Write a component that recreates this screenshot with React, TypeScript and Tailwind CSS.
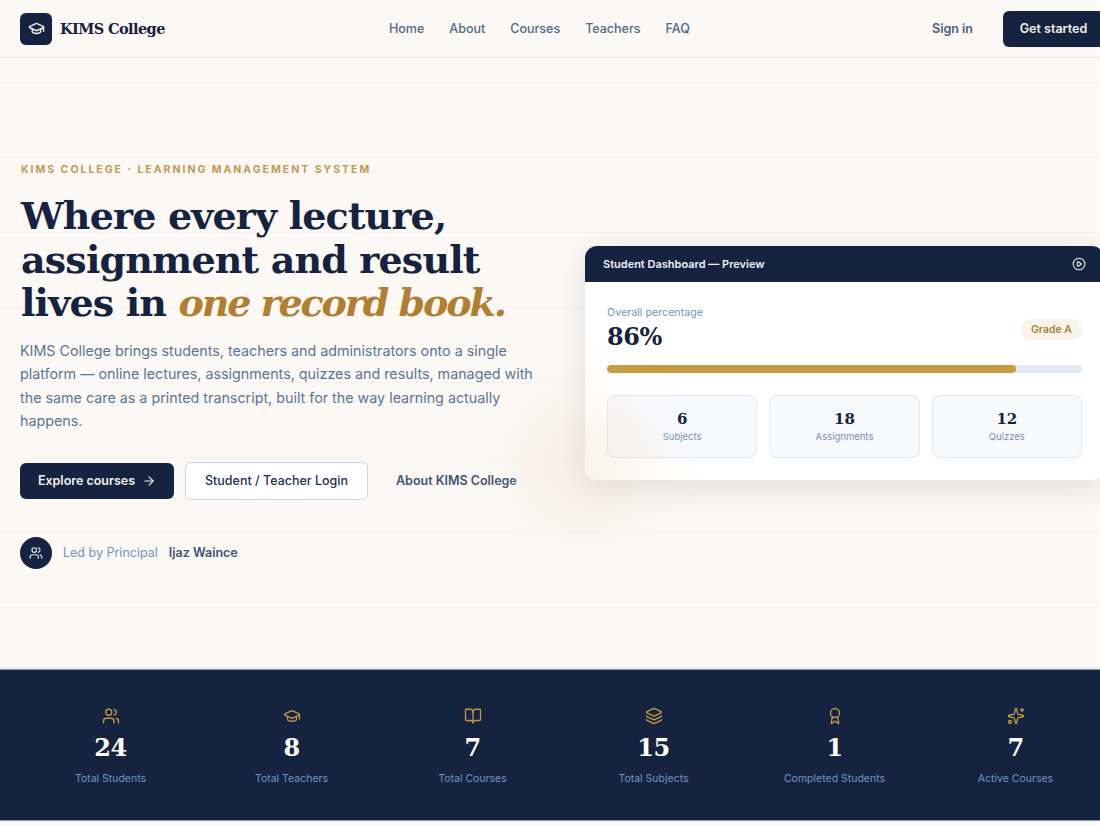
import React from 'react';
import { ArrowRight, Award, BookOpen, CirclePlay, GraduationCap, Layers, Sparkles, Users } from 'lucide-react';

const navLinks = ['Home', 'About', 'Courses', 'Teachers', 'FAQ'];

const previewStats = [
  { value: '6', label: 'Subjects' },
  { value: '18', label: 'Assignments' },
  { value: '12', label: 'Quizzes' },
];

const stats = [
  { icon: Users, value: '24', label: 'Total Students' },
  { icon: GraduationCap, value: '8', label: 'Total Teachers' },
  { icon: BookOpen, value: '7', label: 'Total Courses' },
  { icon: Layers, value: '15', label: 'Total Subjects' },
  { icon: Award, value: '1', label: 'Completed Students' },
  { icon: Sparkles, value: '7', label: 'Active Courses' },
];

function Nav() {
  return (
    <header className="flex h-[58px] items-center border-b border-[#e6ebf3] px-5">
      <div className="flex w-[369px] items-center gap-2">
        <span className="flex h-8 w-8 items-center justify-center rounded-md bg-[#152340] text-[#f6f1e8]">
          <GraduationCap size={17} strokeWidth={2} />
        </span>
        <span className="font-['DejaVu_Serif',serif] text-[14.5px] font-bold tracking-[-0.04em] text-[#152340]">KIMS College</span>
      </div>
      <nav className="flex items-center gap-[25px] pt-px text-[12.5px] font-medium text-[#4f6a8c]">
        {navLinks.map((link) => (
          <span key={link}>{link}</span>
        ))}
      </nav>
      <div className="ml-auto flex items-center gap-[30px]">
        <span className="pt-px text-[12.5px] font-semibold text-[#4a607f]">Sign in</span>
        <span className="flex h-9 w-[101px] items-center justify-center rounded-md bg-[#152340] pt-px text-[12.5px] font-semibold text-[#f4f1ea]">
          Get started
        </span>
      </div>
    </header>
  );
}

function Preview() {
  return (
    <div className="w-[519px] shrink-0 overflow-hidden rounded-xl bg-white shadow-[0_8px_30px_rgba(21,35,64,0.12)]">
      <div className="flex h-9 items-center justify-between bg-[#152340] px-[18px] pt-px text-[#eef1f5]">
        <span className="text-[11px] font-semibold">Student Dashboard — Preview</span>
        <CirclePlay size={14} strokeWidth={1.75} />
      </div>
      <div className="px-[22px] pb-[22px] pt-6">
        <div className="flex items-center justify-between">
          <div>
            <div className="text-[10.7px] leading-[14px] text-[#6f97c0]">Overall percentage</div>
            <div className="font-['DejaVu_Serif',serif] text-[24px] font-bold leading-[34px] tracking-[-0.02em] text-[#152340]">86%</div>
          </div>
          <span className="rounded-full bg-[#fbf4e8] px-[10px] py-[3px] text-[10.5px] font-semibold text-[#a97f3a]">Grade A</span>
        </div>
        <div className="mt-[11px] h-2 overflow-hidden rounded-full bg-[#e4eaf3]">
          <div className="h-full w-[86%] rounded-full bg-[#c89b3f]" />
        </div>
        <div className="mt-[22px] grid grid-cols-3 gap-3">
          {previewStats.map((s) => (
            <div key={s.label} className="flex h-[63px] flex-col items-center justify-center rounded-lg border border-[#dfe7f3] bg-[#f8f9fd]">
              <span className="font-['DejaVu_Serif',serif] text-[15px] font-bold leading-[22px] text-[#152340]">{s.value}</span>
              <span className="text-[9.5px] leading-[14px] text-[#7593b5]">{s.label}</span>
            </div>
          ))}
        </div>
      </div>
    </div>
  );
}

function Hero() {
  return (
    <section className="relative h-[611px] border-b-2 border-[#e9ebee] bg-[#fbf8f5]">
      {/* faint ruled-paper lines */}
      <div className="pointer-events-none absolute inset-0 bg-[repeating-linear-gradient(to_bottom,transparent_0px,transparent_24px,rgba(21,35,64,0.025)_24px,rgba(21,35,64,0.025)_25px,transparent_25px,transparent_75px)]" />
      <div className="relative flex h-full items-center justify-between px-5">
        <div className="w-[520px] shrink-0 pt-[7px]">
          <div className="pl-px text-[10.5px] font-bold leading-[14px] tracking-[0.19em] text-[#c19a50]">KIMS COLLEGE · LEARNING MANAGEMENT SYSTEM</div>
          <h1 className="mt-[17px] pl-px font-['DejaVu_Serif',serif] text-[38px] font-bold leading-[43.5px] tracking-[-0.022em] text-[#152340]">
            Where every lecture,
            <br />
            assignment and result
            <br />
            lives in <em className="tracking-[-0.055em] text-[#b07f30]">one record book.</em>
          </h1>
          <p className="mt-[14px] w-[520px] text-[14.3px] leading-[23.4px] text-[#5a7697]">
            KIMS College brings students, teachers and administrators onto a single platform — online lectures, assignments, quizzes and results, managed with the same care as a printed transcript, built for the way learning actually happens.
          </p>
          <div className="mt-[29px] flex items-center">
            <span className="flex h-9 w-[154px] items-center justify-center gap-[7px] rounded-md bg-[#152340] pt-px text-[12.5px] font-semibold text-[#f1f0ec]">
              Explore courses <ArrowRight size={14} />
            </span>
            <span className="ml-[11px] flex h-[38px] w-[183px] items-center justify-center rounded-md border border-[#c5d5e9] bg-white pt-px text-[12.5px] font-medium text-[#1f3050]">
              Student / Teacher Login
            </span>
            <span className="ml-[28px] pt-px text-[12.5px] font-semibold text-[#3e5475]">About KIMS College</span>
          </div>
          <div className="mt-[37px] flex items-center text-[12.5px]">
            <span className="flex h-8 w-8 items-center justify-center rounded-full bg-[#152340] text-[#dfe6ef]">
              <Users size={14} />
            </span>
            <span className="ml-[11px] pt-[2px] text-[#6f97c0]">Led by Principal</span>
            <span className="ml-[11px] pt-[2px] font-semibold text-[#3e5475]">Ijaz Waince</span>
          </div>
        </div>
        <Preview />
      </div>
      {/* warm glow that spills over the card's corner */}
      <div className="pointer-events-none absolute left-[525px] top-[345px] h-[120px] w-[120px] rounded-full bg-[#f3d9b4] opacity-30 blur-[30px]" />
    </section>
  );
}

function Stats() {
  return (
    <section className="grid h-[152px] grid-cols-6 border-y border-[#8e99ab] bg-[#152340] pl-5 pr-[18px]">
      {stats.map(({ icon: Icon, value, label }) => (
        <div key={label} className="flex flex-col items-center pt-[37px]">
          <Icon size={18} strokeWidth={1.75} className="text-[#c19a43]" />
          <span className="mt-[7px] font-['DejaVu_Serif',serif] text-[24px] font-bold leading-[32px] tracking-[-0.02em] text-white">{value}</span>
          <span className="mt-[7px] text-[10.5px] leading-[16px] text-[#6f97c8]">{label}</span>
        </div>
      ))}
    </section>
  );
}

export default function App() {
  return (
    <div className="h-[826px] w-[1100px] overflow-hidden bg-[#fbf8f5] font-['Inter',sans-serif]">
      <div className="w-[1124px]">
        <Nav />
        <Hero />
        <Stats />
      </div>
    </div>
  );
}
